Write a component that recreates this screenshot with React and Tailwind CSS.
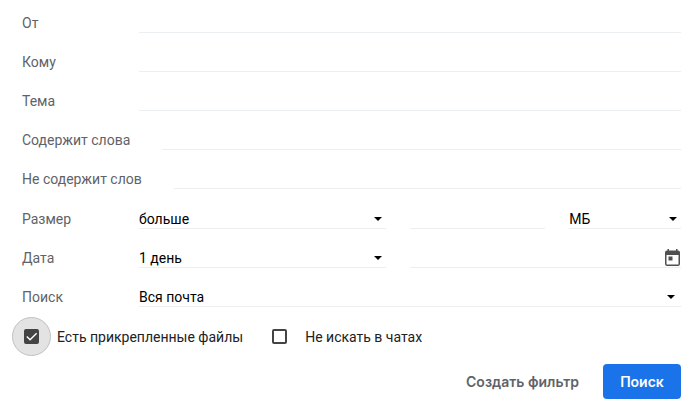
import React, { useState } from "react";

const TextRow = ({ id, label }) => (
  <div className="flex h-[39px] items-end">
    <label
      htmlFor={id}
      className="min-w-[117px] shrink-0 pr-8 leading-5 text-[#5f6368]"
    >
      {label}
    </label>
    <input
      id={id}
      type="text"
      className="h-5 min-w-0 flex-1 border-b border-[#eceff1] outline-none"
    />
  </div>
);

const SelectField = ({ id, label, options, arrowClass = "right-1" }) => (
  <div className="relative">
    <select
      id={id}
      aria-label={label}
      className="block h-5 w-full appearance-none border-b border-[#eceff1] bg-transparent leading-5 text-black outline-none"
    >
      {options.map((option) => (
        <option key={option}>{option}</option>
      ))}
    </select>
    <svg
      viewBox="0 0 8 4"
      className={`pointer-events-none absolute top-2 h-1 w-2 ${arrowClass}`}
    >
      <path d="M0 0h8L4 4z" fill="#000" />
    </svg>
  </div>
);

const SelectRow = ({ id, label, children }) => (
  <div className="flex h-[39px] items-end">
    <label htmlFor={id} className="w-[117px] shrink-0 leading-5 text-[#5f6368]">
      {label}
    </label>
    <div className="grid flex-1 grid-cols-[247fr_136fr_112fr] gap-6">
      {children}
    </div>
  </div>
);

const Checkbox = ({ id, label, checked, onChange, highlighted }) => (
  <div className="flex items-center gap-[6px]">
    <span
      className={`relative flex size-[39px] items-center justify-center rounded-full border ${
        highlighted ? "border-[#bdc1c6] bg-[#e3e3e3]" : "border-transparent"
      }`}
    >
      <input
        id={id}
        type="checkbox"
        checked={checked}
        onChange={(e) => onChange(e.target.checked)}
        className="size-[15px] appearance-none rounded-xs border-2 border-[#444] checked:bg-[#444]"
      />
      {checked && (
        <svg
          viewBox="0 0 16 16"
          className="pointer-events-none absolute size-[15px]"
          fill="none"
          stroke="#fff"
          strokeWidth="1.5"
        >
          <path d="M3 8l3.500 3.500L13.500 4.500" />
        </svg>
      )}
    </span>
    <label htmlFor={id} className="text-[#202124]">
      {label}
    </label>
  </div>
);

const App = () => {
  const [hasFiles, setHasFiles] = useState(true);
  const [skipChats, setSkipChats] = useState(false);

  return (
    <form
      onSubmit={(e) => e.preventDefault()}
      className="bg-white pr-[19px] pb-4 pl-[22px] font-['Roboto',sans-serif] text-[14px] leading-5"
    >
      <div className="-mt-[6px]">
        <TextRow id="from" label="От" />
        <TextRow id="to" label="Кому" />
        <TextRow id="subject" label="Тема" />
        <TextRow id="has" label="Содержит слова" />
        <TextRow id="hasNot" label="Не содержит слов" />
      </div>

      <div className="mt-px">
        <SelectRow id="size" label="Размер">
          <SelectField id="size" options={["больше", "меньше"]} />
          <input
            type="text"
            aria-label="Размер, число"
            className="h-5 min-w-0 border-b border-[#eceff1] outline-none"
          />
          <SelectField label="Единица" options={["МБ", "КБ", "байт"]} />
        </SelectRow>

        <SelectRow id="within" label="Дата">
          <SelectField id="within" options={["1 день", "3 дня", "1 неделя"]} />
          <div className="col-span-2 flex h-5 items-end border-b border-[#eceff1]">
            <input
              type="text"
              aria-label="Дата"
              className="min-w-0 flex-1 outline-none"
            />
            <button type="button" aria-label="Календарь" className="mr-px pb-px">
              <svg
                viewBox="0 0 15 17"
                className="h-[17px] w-[15px]"
                fill="#505050"
              >
                <path
                  fillRule="evenodd"
                  d="M2.500 0h1.500v1.500h7V0h1.500v1.500h.5a2 2 0 0 1 2 2V15a2 2 0 0 1-2 2H2a2 2 0 0 1-2-2V3.500a2 2 0 0 1 2-2h.5zM1.500 6v9.500h12V6z"
                />
                <path d="M3.500 7.500h4v4h-4z" />
              </svg>
            </button>
          </div>
        </SelectRow>

        <SelectRow id="scope" label="Поиск">
          <div className="col-span-3">
            <SelectField
              id="scope"
              options={["Вся почта", "Входящие", "Отправленные"]}
              arrowClass="right-[6px]"
            />
          </div>
        </SelectRow>
      </div>

      <div className="mt-[10px] -ml-[10px] flex gap-[17px]">
        <Checkbox
          id="hasFiles"
          label="Есть прикрепленные файлы"
          checked={hasFiles}
          onChange={setHasFiles}
          highlighted
        />
        <Checkbox
          id="skipChats"
          label="Не искать в чатах"
          checked={skipChats}
          onChange={setSkipChats}
        />
      </div>

      <div className="mt-2 flex items-center justify-end gap-6 font-['Inter',sans-serif] text-[14px] font-semibold">
        <button type="button" className="text-[#5f6368]">
          Создать фильтр
        </button>
        <button
          type="submit"
          className="h-[35px] w-[78px] rounded-sm bg-[#1a73e8] text-white"
        >
          Поиск
        </button>
      </div>
    </form>
  );
};

export default App;
